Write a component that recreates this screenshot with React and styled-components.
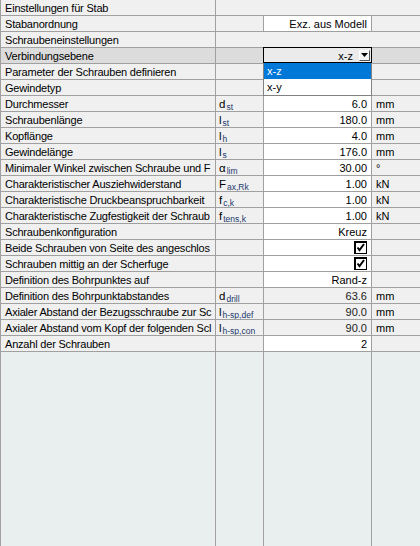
import React from "react";
import styled, { createGlobalStyle } from "styled-components";

const GlobalStyle = createGlobalStyle`
  html, body, #root { height: 100%; }
  body {
    margin: 0;
    font-family: "Liberation Sans", Arial, sans-serif;
    font-size: 11px;
    color: #000;
    background: #e9eeee;
  }
  * { box-sizing: border-box; }
`;

const LINE = "#a0a0a0";
const COLS = "215px 48px 108px 1fr";

const Sheet = styled.div`
  display: flex;
  flex-direction: column;
  height: 100vh;
  border-left: 1px solid ${LINE};
  background: #e9eeee;
`;

const Row = styled.div`
  display: grid;
  grid-template-columns: ${(p) => (p.$header ? "215px 1fr" : COLS)};
  height: 16px;
  border-bottom: 1px solid ${LINE};
  background: ${(p) => (p.$selected ? "#dcdcdc" : "#f0f0f0")};
`;

const Cell = styled.div`
  position: relative;
  height: 15px;
  line-height: 15px;
  padding-top: 1px;
  white-space: nowrap;
  overflow: ${(p) => (p.$open ? "visible" : "hidden")};
  border-right: 1px solid ${LINE};
  &:last-child { border-right: none; }
`;

const LabelCell = styled(Cell)`
  padding-left: 4px;
  letter-spacing: -0.2px;
`;

const SymCell = styled(Cell)`
  padding-left: 3px;
`;

const ValueCell = styled(Cell)`
  text-align: right;
  padding-right: 4px;
  background: ${(p) => (p.$white ? "#ffffff" : "transparent")};
  color: ${(p) => (p.$readonly ? "#222" : "#000")};
  z-index: ${(p) => (p.$open ? 10 : "auto")};
`;

const UnitCell = styled(Cell)`
  padding-left: 4px;
`;

const Sym = styled.span`
  font-size: 11.5px;
  color: #000;
`;

const Sub = styled.span`
  font-size: 8.5px;
  color: #22386e;
  vertical-align: -1.5px;
  margin-left: 1px;
`;

const Filler = styled.div`
  flex: 1;
  display: grid;
  grid-template-columns: ${COLS};
`;

const FillerCol = styled.div`
  border-right: 1px solid ${LINE};
  &:last-child { border-right: none; }
`;

const Combo = styled.div`
  position: absolute;
  top: -1px;
  left: -1px;
  right: -1px;
  height: 16px;
  border: 1px solid #000;
  background: #ebebeb;
  display: flex;
  align-items: center;
  justify-content: flex-end;
  padding-right: 1px;
  gap: 6px;
  line-height: 14px;
`;

const ComboText = styled.span`
  padding-top: 1px;
`;

const ArrowButton = styled.div`
  width: 11px;
  height: 11px;
  background: #f4f4f4;
  border-top: 1px solid #fff;
  border-left: 1px solid #fff;
  border-right: 1px solid #555;
  border-bottom: 1px solid #555;
  display: flex;
  align-items: center;
  justify-content: center;
`;

const List = styled.div`
  position: absolute;
  top: 15px;
  left: -1px;
  right: -1px;
  background: #fff;
  border: 1px solid #828282;
  border-top: none;
  text-align: left;
`;

const ListItem = styled.div`
  height: 16px;
  line-height: 16px;
  padding-left: 3px;
  background: ${(p) => (p.$active ? "#0078d7" : "#fff")};
  color: ${(p) => (p.$active ? "#fff" : "#000")};
`;

const CheckBox = styled.span`
  display: inline-block;
  width: 13px;
  height: 13px;
  vertical-align: top;
`;

function Check() {
  return (
    <CheckBox>
      <svg width="13" height="13" viewBox="0 0 13 13">
        <rect x="0.5" y="0.5" width="12" height="12" fill="#fff" stroke="#000" />
        <path d="M1 1.5H12M1.5 1V12" stroke="#000" strokeWidth="1" />
        <path d="M3.5 6.5L5.5 9L10 3" fill="none" stroke="#000" strokeWidth="2" />
      </svg>
    </CheckBox>
  );
}

function Arrow() {
  return (
    <svg width="7" height="4" viewBox="0 0 7 4">
      <path d="M0 0H7L3.5 4Z" fill="#000" />
    </svg>
  );
}

const rows = [
  { header: true, label: "Einstellungen für Stab" },
  { label: "Stabanordnung", value: "Exz. aus Modell", white: true },
  { header: true, label: "Schraubeneinstellungen" },
  { label: "Verbindungsebene", combo: true, selected: true },
  { label: "Parameter der Schrauben definieren", white: true },
  { label: "Gewindetyp", white: true },
  { label: "Durchmesser", sym: "d", sub: "st", value: "6.0", unit: "mm", white: true },
  { label: "Schraubenlänge", sym: "l", sub: "st", value: "180.0", unit: "mm", white: true },
  { label: "Kopflänge", sym: "l", sub: "h", value: "4.0", unit: "mm", white: true },
  { label: "Gewindelänge", sym: "l", sub: "s", value: "176.0", unit: "mm", white: true },
  { label: "Minimaler Winkel zwischen Schraube und F", sym: "α", sub: "lim", value: "30.00", unit: "°", white: true },
  { label: "Charakteristischer Ausziehwiderstand", sym: "F", sub: "ax,Rk", value: "1.00", unit: "kN", white: true },
  { label: "Charakteristische Druckbeanspruchbarkeit", sym: "f", sub: "c,k", value: "1.00", unit: "kN", white: true },
  { label: "Charakteristische Zugfestigkeit der Schraub", sym: "f", sub: "tens,k", value: "1.00", unit: "kN", white: true },
  { label: "Schraubenkonfiguration", value: "Kreuz", white: true },
  { label: "Beide Schrauben von Seite des angeschlos", check: true, white: true },
  { label: "Schrauben mittig an der Scherfuge", check: true, white: true },
  { label: "Definition des Bohrpunktes auf", value: "Rand-z", white: true },
  { label: "Definition des Bohrpunktabstandes", sym: "d", sub: "drill", value: "63.6", unit: "mm", readonly: true },
  { label: "Axialer Abstand der Bezugsschraube zur Sc", sym: "l", sub: "h-sp,def", value: "90.0", unit: "mm", readonly: true },
  { label: "Axialer Abstand vom Kopf der folgenden Scl", sym: "l", sub: "h-sp,con", value: "90.0", unit: "mm", readonly: true },
  { label: "Anzahl der Schrauben", value: "2", white: true },
];

export default function App() {
  return (
    <>
      <GlobalStyle />
      <Sheet>
        {rows.map((r, i) =>
          r.header ? (
            <Row key={i} $header>
              <LabelCell>{r.label}</LabelCell>
              <Cell />
            </Row>
          ) : (
            <Row key={i} $selected={r.selected}>
              <LabelCell>{r.label}</LabelCell>
              <SymCell>
                {r.sym && (
                  <>
                    <Sym>{r.sym}</Sym>
                    <Sub>{r.sub}</Sub>
                  </>
                )}
              </SymCell>
              <ValueCell $white={r.white} $readonly={r.readonly} $open={r.combo}>
                {r.combo ? (
                  <Combo>
                    <ComboText>x-z</ComboText>
                    <ArrowButton>
                      <Arrow />
                    </ArrowButton>
                    <List>
                      <ListItem $active>x-z</ListItem>
                      <ListItem>x-y</ListItem>
                    </List>
                  </Combo>
                ) : r.check ? (
                  <Check />
                ) : (
                  r.value
                )}
              </ValueCell>
              <UnitCell>{r.unit}</UnitCell>
            </Row>
          )
        )}
        <Filler>
          <FillerCol />
          <FillerCol />
          <FillerCol />
          <FillerCol />
        </Filler>
      </Sheet>
    </>
  );
}
